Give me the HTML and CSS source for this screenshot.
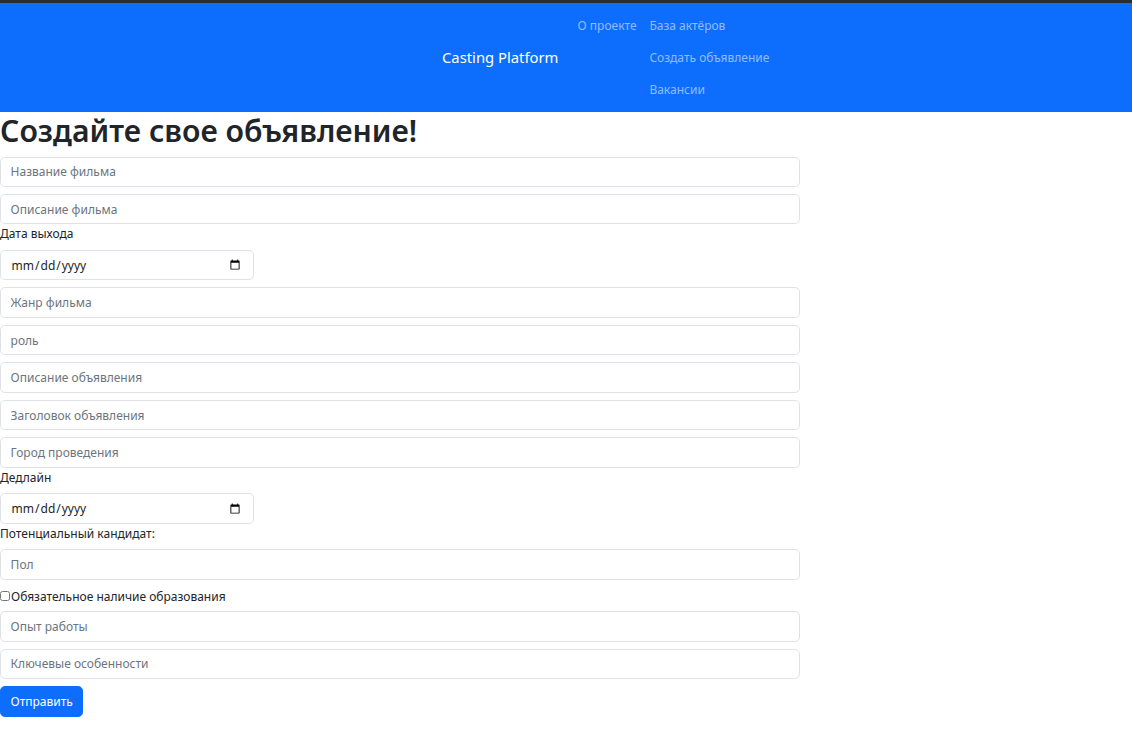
FILE: index.html
```html
<!DOCTYPE html>
<html lang="ru">
<head>
<meta charset="utf-8">
<title>Casting Platform</title>
<link rel="stylesheet" href="styles.css">
</head>
<body>
<div class="topline"></div>
<nav class="navbar">
  <a class="brand" href="#">Casting Platform</a>
  <ul class="nav">
    <li><a class="nav-link" href="#">О проекте</a></li>
    <li class="nav-col">
      <a class="nav-link" href="#">База актёров</a>
      <a class="nav-link" href="#">Создать объявление</a>
      <a class="nav-link" href="#">Вакансии</a>
    </li>
  </ul>
</nav>
<main class="page">
  <h1 class="title">Создайте свое объявление!</h1>
  <form class="form">
    <input class="control first" type="text" placeholder="Название фильма">
    <input class="control" type="text" placeholder="Описание фильма">
    <label class="label">Дата выхода</label>
    <input class="control date" type="date">
    <input class="control" type="text" placeholder="Жанр фильма">
    <input class="control" type="text" placeholder="роль">
    <input class="control" type="text" placeholder="Описание объявления">
    <input class="control" type="text" placeholder="Заголовок объявления">
    <input class="control" type="text" placeholder="Город проведения">
    <label class="label">Дедлайн</label>
    <input class="control date" type="date">
    <label class="label">Потенциальный кандидат:</label>
    <input class="control" type="text" placeholder="Пол">
    <label class="check"><input class="checkbox" type="checkbox">Обязательное наличие образования</label>
    <input class="control" type="text" placeholder="Опыт работы">
    <input class="control" type="text" placeholder="Ключевые особенности">
    <button class="btn" type="button">Отправить</button>
  </form>
</main>
</body>
</html>
```

FILE: styles.css
```css
* { box-sizing: border-box; }
html, body { margin: 0; padding: 0; }
body {
  font-family: "Noto Sans", "Open Sans", sans-serif;
  font-size: 12px;
  line-height: 19.2px;
  color: #212529;
  background: #fff;
}
.topline { height: 3px; background: #2e2e2e; }
.navbar {
  background: #0d6efd;
  display: flex;
  align-items: center;
  padding: 6.4px 0 6.4px 442px;
}
.brand {
  color: #fff;
  text-decoration: none;
  font-size: 14.8px;
  margin-right: 12.8px;
  line-height: 24px;
}
.nav {
  list-style: none;
  margin: 0;
  padding: 0;
  display: flex;
  align-items: flex-start;
}
.nav-col { display: flex; flex-direction: column; }
.nav-link {
  display: block;
  color: rgba(255,255,255,0.55);
  text-decoration: none;
  padding: 6.4px 6.4px;
  line-height: 19.2px;
}
.page { padding: 0; }
.title {
  margin: 0 0 6.4px;
  font-size: 30.2px;
  font-weight: 600;
  line-height: 38.4px;
}
.form { display: flex; flex-direction: column; align-items: flex-start; }
.control {
  display: block;
  width: 800px;
  height: 30.4px;
  margin-top: 7.1px;
  padding: 4.8px 9.6px;
  font: inherit;
  color: #212529;
  border: 1px solid #dee2e6;
  border-radius: 4.8px;
  background: #fff;
}
.control.first { margin-top: 0; }
.control::placeholder { color: #6c757d; }
.control.date { width: 254px; }
.label { display: block; line-height: 19.2px; }
.label + .control { margin-top: 6.4px; }
.check {
  display: flex;
  align-items: center;
  margin-top: 7px;
  line-height: 19.2px;
}
.check + .control { margin-top: 5.2px; }
.checkbox { width: 10px; height: 10px; margin: 0 1px 0 0; }
.btn {
  margin-top: 7.1px;
  height: 30.4px;
  padding: 0 9.6px;
  font: inherit;
  color: #fff;
  background: #0d6efd;
  border: 1px solid #0d6efd;
  border-radius: 4.8px;
}
```
